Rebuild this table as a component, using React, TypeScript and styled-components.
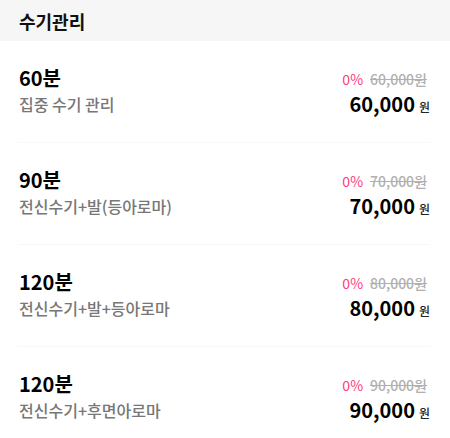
import { createGlobalStyle, styled } from "styled-components"

const GlobalStyle = createGlobalStyle`
  html, body {
    margin: 0;
    padding: 0;
    background: #fff;
    font-family: "Noto Sans CJK KR", "Noto Sans", sans-serif;
  }
`

const Header = styled.div`
  display: flex;
  align-items: center;
  height: 41px;
  padding-left: 19px;
  background-color: #f6f6f6;
  font-size: 18px;
  font-weight: 700;
  color: #111;
`

const List = styled.ul`
  list-style: none;
  margin: 0;
  padding: 0 20px 0 18px;
`

const Row = styled.li`
  display: flex;
  justify-content: space-between;
  align-items: flex-start;
  padding: 23px 0 24px 1px;
  border-bottom: 1px solid #f8f8f8;

  &:last-child {
    border-bottom: none;
  }
`

const Info = styled.div`
  display: flex;
  flex-direction: column;
`

const Title = styled.span`
  font-size: 20px;
  font-weight: 700;
  line-height: 28px;
  color: #000;
`

const Desc = styled.span`
  font-size: 16px;
  font-weight: 500;
  line-height: 24px;
  color: #777;
`

const Prices = styled.div`
  display: flex;
  flex-direction: column;
  align-items: flex-end;
  padding-top: 5px;
`

const Discount = styled.div`
  display: flex;
  align-items: center;
  gap: 7px;
  font-size: 14px;
  line-height: 20px;
  padding-right: 3px;
`

const Rate = styled.span`
  color: #ff3b7d;
`

const OldPrice = styled.span`
  color: #b0b0b0;
  font-weight: 500;
  text-decoration: line-through;
`

const Price = styled.div`
  display: flex;
  align-items: baseline;
  gap: 4px;
  margin-top: 1px;
`

const Amount = styled.span`
  font-size: 20px;
  font-weight: 700;
  line-height: 28px;
  color: #000;
`

const Won = styled.span`
  font-size: 12px;
  font-weight: 500;
  color: #222;
`

const items = [
  { time: "60분", desc: "집중 수기 관리", price: "60,000" },
  { time: "90분", desc: "전신수기+발(등아로마)", price: "70,000" },
  { time: "120분", desc: "전신수기+발+등아로마", price: "80,000" },
  { time: "120분", desc: "전신수기+후면아로마", price: "90,000" },
]

export default function App() {
  return (
    <>
      <GlobalStyle />
      <Header>수기관리</Header>
      <List>
        {items.map((item, i) => (
          <Row key={i}>
            <Info>
              <Title>{item.time}</Title>
              <Desc>{item.desc}</Desc>
            </Info>
            <Prices>
              <Discount>
                <Rate>0%</Rate>
                <OldPrice>{item.price}원</OldPrice>
              </Discount>
              <Price>
                <Amount>{item.price}</Amount>
                <Won>원</Won>
              </Price>
            </Prices>
          </Row>
        ))}
      </List>
    </>
  )
}
